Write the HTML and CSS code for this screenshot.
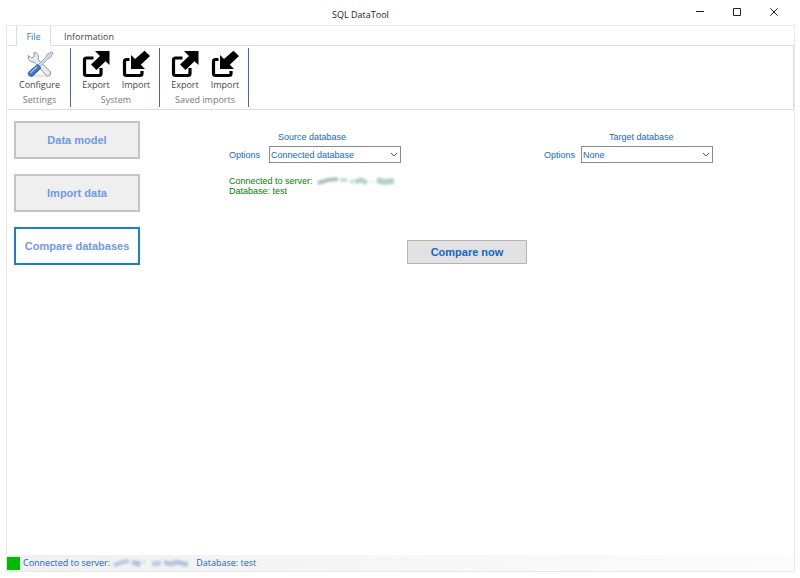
FILE: index.html
```html
<!DOCTYPE html>
<html lang="en">
<head>
  <meta charset="UTF-8" />
  <title>SQL DataTool</title>
  <meta name="viewport" content="width=device-width, initial-scale=1" />
  <link rel="stylesheet" href="styles.css">
</head>
<body>

  <!-- Shared icons -->
  <svg class="sprite" aria-hidden="true">
    <symbol id="icon-export" viewBox="0 0 28 28">
      <path d="M11.500 8H4.500Q2.500 8 2.500 10V23.500Q2.500 25.500 4.500 25.500H17Q19 25.500 19 23.500V18" fill="none" stroke="#000" stroke-width="3.200" />
      <path d="M13 1H27.500V15L23.500 11.300L14.500 20L9 14.500L18 6Z" fill="#000" />
    </symbol>
    <symbol id="icon-import" viewBox="0 0 28 28">
      <path d="M7.500 9.500H4.500Q2.500 9.500 2.500 11.500V23.500Q2.500 25.500 4.500 25.500H18Q20 25.500 20 23.500V21" fill="none" stroke="#000" stroke-width="3.200" />
      <path d="M9 5L13 9L22.500 0.800L28 6L18.800 14.700L23 19H9Z" fill="#000" />
    </symbol>
  </svg>

  <div class="window">
    <header class="titlebar">
      <h1>SQL DataTool</h1>
      <div class="window-buttons">
        <button type="button" aria-label="Minimize"><svg viewBox="0 0 8 8"><path d="M0 3.500H8" /></svg></button>
        <button type="button" aria-label="Maximize"><svg viewBox="0 0 8 8"><path d="M0.500 0.500H7.500V7.500H0.500Z" /></svg></button>
        <button type="button" aria-label="Close"><svg viewBox="0 0 8 8"><path d="M0.300 0.300L7.700 7.700M7.700 0.300L0.300 7.700" /></svg></button>
      </div>
    </header>

    <div class="client">
      <nav class="tabs">
        <a class="tab active" href="#file">File</a>
        <a class="tab" href="#information">Information</a>
      </nav>

      <div class="ribbon" id="file">
        <section class="group settings">
          <div class="tools">
            <button type="button" class="tool">
              <svg viewBox="0 0 28 28" aria-hidden="true">
                <ellipse cx="14" cy="26" rx="11" ry="1.500" fill="#e3e3e3" />
                <path d="M8 2.200L8.300 6.500L5.500 8L2.300 5.500C1.500 9.500 4 12.500 8 12L19.500 24.500C20.800 26 22.500 26.200 23.800 25C25 23.700 24.800 22 23.500 20.800L12 9.500C13.300 5.500 11.500 2.500 8 2.200Z" fill="#e9ebec" stroke="#8c9196" />
                <path d="M25.800 1.800L27 3L24.500 7.500L21.500 9L14.500 16.500L12.500 14.500L19.500 7.500L21 4.500Z" fill="#cbdcec" stroke="#8499ae" stroke-width="0.800" />
                <path d="M11.500 14.500L15 18L7.500 25.500C5.500 27 3.500 26.500 2.800 25.300C1.800 24 2 22.500 3.500 21.200Z" fill="#3f74bd" stroke="#285a9e" stroke-width="0.800" />
                <path d="M10.800 17L5 22.500" stroke="#9cc0e8" stroke-width="1.400" stroke-linecap="round" />
              </svg>
              <span>Configure</span>
            </button>
          </div>
          <p class="group-name">Settings</p>
        </section>
        <section class="group">
          <div class="tools">
            <button type="button" class="tool"><svg aria-hidden="true"><use href="#icon-export" /></svg><span>Export</span></button>
            <button type="button" class="tool"><svg aria-hidden="true"><use href="#icon-import" /></svg><span>Import</span></button>
          </div>
          <p class="group-name">System</p>
        </section>
        <section class="group">
          <div class="tools">
            <button type="button" class="tool"><svg aria-hidden="true"><use href="#icon-export" /></svg><span>Export</span></button>
            <button type="button" class="tool"><svg aria-hidden="true"><use href="#icon-import" /></svg><span>Import</span></button>
          </div>
          <p class="group-name">Saved imports</p>
        </section>
      </div>

      <div class="content">
        <div class="sidebar">
          <button type="button">Data model</button>
          <button type="button">Import data</button>
          <button type="button" class="selected">Compare databases</button>
        </div>

        <main class="compare">
          <div class="databases">
            <section class="database">
              <h2>Source database</h2>
              <div class="field">
                <label for="source">Options</label>
                <div class="dropdown">
                  <select id="source"><option>Connected database</option><option>None</option></select>
                  <svg viewBox="0 0 8 5" aria-hidden="true"><path d="M1 1L4 4L7 1" /></svg>
                </div>
              </div>
              <p class="connection">
                Connected to server:
                <svg class="server" viewBox="0 0 80 10" aria-hidden="true">
                  <path d="M3 7L13 4L23 3" stroke="#719c87" stroke-width="4" />
                  <path d="M25 4H32M38 4L36 7" stroke="#a3c5aa" stroke-width="4" />
                  <path d="M40 6L46 4L52 7" stroke="#79b5b0" stroke-width="5" />
                  <path d="M56 6H58" stroke="#bfdcb0" stroke-width="3" />
                  <path d="M62 4L69 6L79 5" stroke="#82b5a0" stroke-width="6" />
                </svg><br>
                Database: test
              </p>
            </section>
            <section class="database target">
              <h2>Target database</h2>
              <div class="field">
                <label for="target">Options</label>
                <div class="dropdown">
                  <select id="target"><option>None</option><option>Connected database</option></select>
                  <svg viewBox="0 0 8 5" aria-hidden="true"><path d="M1 1L4 4L7 1" /></svg>
                </div>
              </div>
            </section>
          </div>
          <button type="button" class="compare-btn">Compare now</button>
        </main>
      </div>

      <footer class="statusbar">
        <span class="light"></span>
        <span>Connected to server:</span>
        <svg class="server" viewBox="0 0 80 10" aria-hidden="true">
          <path d="M1 7L10 4L16 3" stroke="#8fb0d2" stroke-width="4" />
          <path d="M19 4L25 6L26 3" stroke="#84a5cf" stroke-width="5" />
          <path d="M30 4H32" stroke="#b6cbe0" stroke-width="3" />
          <path d="M39 6L48 5" stroke="#9cb4da" stroke-width="5" />
          <path d="M51 4L57 6L65 4L71 6H75" stroke="#85a8cf" stroke-width="5" />
        </svg>
        <span>Database: test</span>
      </footer>
    </div>
  </div>

</body>
</html>
```

FILE: styles.css
```css
* {
  box-sizing: border-box;
}
body {
  margin: 0;
  background: #fff;
  color: #444;
  font-family: "Open Sans", "Noto Sans", sans-serif;
  font-size: 9px;
  line-height: 14px;
}
h1, h2, p {
  margin: 0;
  font-size: inherit;
  font-weight: normal;
}
button, select {
  font: inherit;
  color: inherit;
  margin: 0;
  padding: 0;
}
.sprite {
  display: none;
}
.window {
  display: flex;
  flex-direction: column;
  min-height: 100vh;
  padding: 0 5px 6px 6px;
}

/* Title bar */
.titlebar {
  display: grid;
  grid-template-columns: 1fr auto 1fr;
  align-items: center;
  height: 25px;
}
.titlebar h1 {
  grid-column: 2;
  padding: 5px 80px 0 0;
  color: #222;
}
.window-buttons {
  display: flex;
  justify-content: flex-end;
  padding-right: 3px;
}
.window-buttons button {
  width: 37px;
  height: 25px;
  border: none;
  background: none;
}
.window-buttons svg {
  width: 8px;
  height: 8px;
  fill: none;
  stroke: #222;
}

.client {
  flex: 1;
  display: flex;
  flex-direction: column;
  border: 1px solid #e8e8e8;
}

/* Ribbon */
.tabs {
  display: flex;
  height: 20px;
  padding-left: 9px;
  border-bottom: 1px solid #ddd;
}
.tab {
  height: 20px;
  padding: 4px 13px 0;
  color: #444;
  text-decoration: none;
}
.tab.active {
  width: 35px;
  padding: 4px 0 0;
  border: solid #ddd;
  border-width: 0 1px;
  background: #fff;
  color: #2a7fd4;
  text-align: center;
}
.ribbon {
  display: flex;
  height: 64px;
  padding: 2px 0;
  border: solid #ddd;
  border-width: 0 1px 1px 0;
}
.group {
  width: 89px;
  padding: 2px 0 0 2px;
  border-right: 1px solid #4a68b0;
  text-align: center;
}
.group.settings {
  width: 64px;
}
.tools {
  display: flex;
  justify-content: center;
}
.tool {
  display: flex;
  flex-direction: column;
  align-items: center;
  width: 40px;
  border: none;
  background: none;
}
.settings .tool {
  width: 60px;
}
.tool svg {
  width: 28px;
  height: 28px;
}
.tool span {
  line-height: 13px;
}
.group-name {
  padding-top: 2px;
  color: #777;
}

/* Content */
.content {
  flex: 1;
  display: flex;
  padding: 11px 0 0 7px;
  font-family: "Liberation Sans", Arial, sans-serif;
  line-height: 10px;
}
.sidebar {
  display: flex;
  flex-direction: column;
  gap: 15px;
  width: 126px;
}
.sidebar button {
  height: 38px;
  border: 2px solid #c4c4c4;
  background: #efefef;
  color: #7099e6;
  font-size: 11px;
  font-weight: bold;
}
.sidebar .selected {
  border-color: #1c7fca;
  background: #fff;
}
.compare {
  flex: 1;
  color: #1565c8;
}
.databases {
  display: flex;
  justify-content: space-between;
  min-height: 119px;
  padding: 11px 81px 0 89px;
}
.database h2 {
  padding-left: 49px;
}
.database.target h2 {
  padding-left: 65px;
}
.field {
  display: flex;
  align-items: center;
  justify-content: space-between;
  width: 172px;
  margin-top: 4px;
}
.target .field {
  width: 169px;
}
.dropdown {
  display: grid;
  align-items: center;
}
.dropdown select,
.dropdown svg {
  grid-area: 1 / 1;
}
.dropdown select {
  appearance: none;
  width: 132px;
  height: 17px;
  padding: 0 1px;
  border: 1px solid #8a8a8a;
  border-radius: 0;
  background: #fff;
}
.dropdown svg {
  justify-self: end;
  width: 8px;
  height: 5px;
  margin-right: 3px;
  fill: none;
  stroke: #555;
  pointer-events: none;
}
.connection {
  padding-top: 13px;
  color: #008000;
}
.server {
  width: 80px;
  height: 10px;
  fill: none;
  filter: blur(1px);
  opacity: 0.6;
}
.connection .server {
  vertical-align: top;
}
.compare-btn {
  display: block;
  width: 120px;
  height: 24px;
  margin: 0 auto;
  border: 1px solid #b4b4b4;
  background: #e1e1e1;
  font-size: 11px;
  font-weight: bold;
}

/* Status bar */
.statusbar {
  display: flex;
  align-items: center;
  gap: 3px;
  height: 16px;
  background: linear-gradient(to right, #f0f0f0, #fcfcfc);
  color: #1565c8;
}
.light {
  width: 13px;
  height: 13px;
  background: #0b0;
}
```
